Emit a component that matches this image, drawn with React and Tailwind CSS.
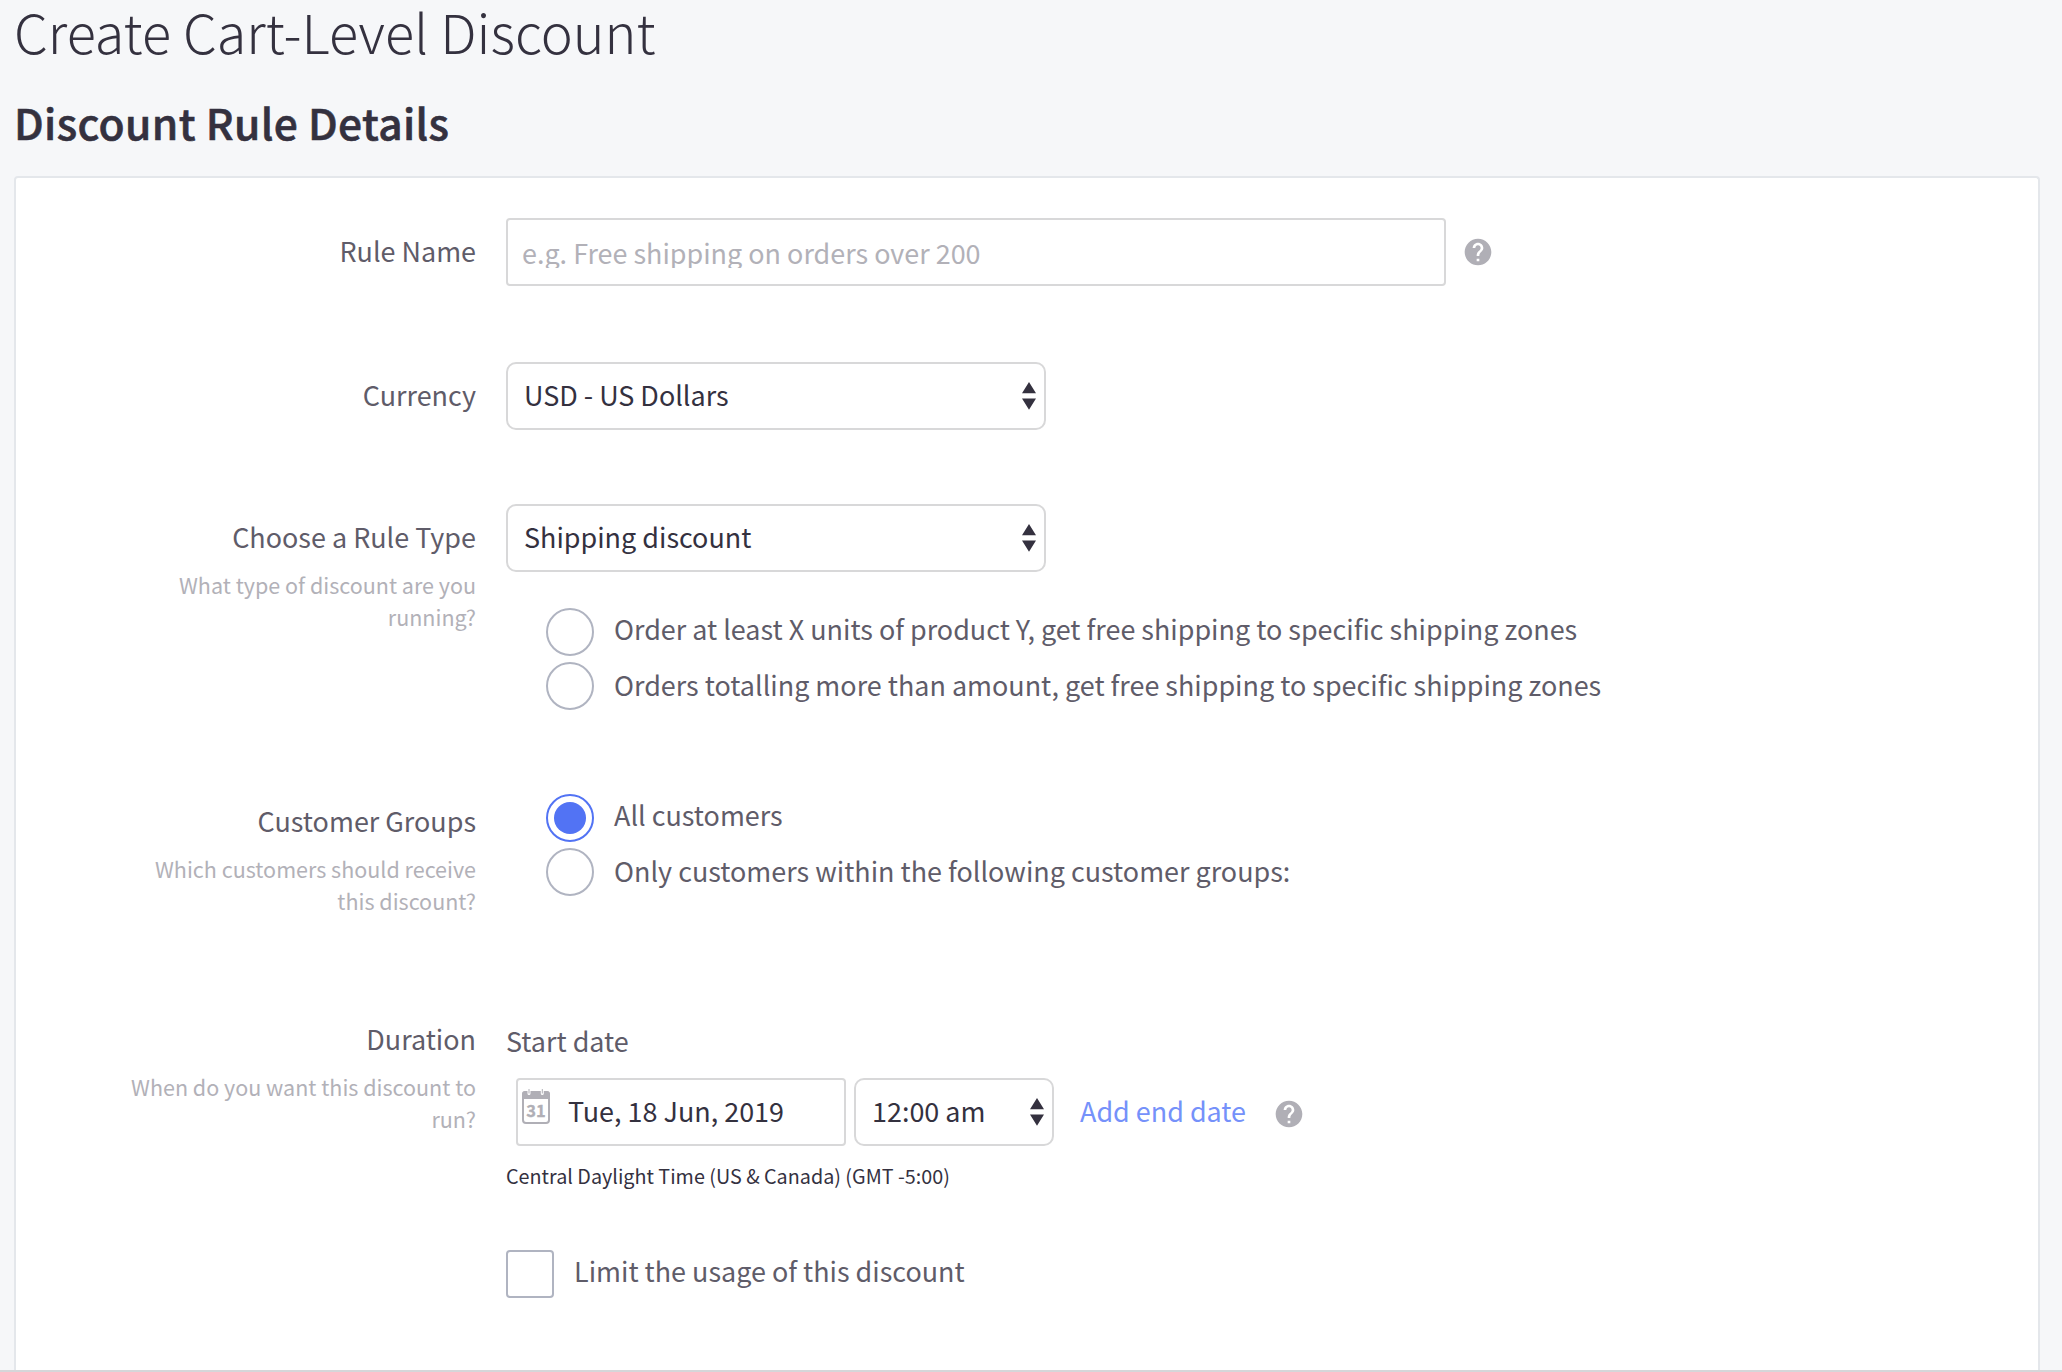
import { MdHelp } from "react-icons/md";

function Arrows() {
  return (
    <svg className="h-7 w-3.5 shrink-0 fill-[#34313f]" viewBox="0 0 14 28">
      <path d="M7 0L14 11.2H0z M0 16.4h14L7 27.8z" />
    </svg>
  );
}

function Select({ children, className }) {
  return (
    <button
      type="button"
      className={`flex h-[68px] items-center justify-between rounded-[10px] border-2 border-[#d8d8d9] bg-white pb-px pr-2 pl-4 text-[#34313f] ${className}`}
    >
      <span>{children}</span>
      <Arrows />
    </button>
  );
}

function Radio({ checked, textClass, children }) {
  return (
    <label className="flex h-[54px] items-start gap-5 pl-10">
      <span
        className={`flex size-12 shrink-0 items-center justify-center rounded-full border-2 bg-white ${
          checked ? "border-[#5273f4]" : "border-[#b0b4c1]"
        }`}
      >
        {checked && <span className="size-8 rounded-full bg-[#5273f4]" />}
      </span>
      <span className={textClass}>{children}</span>
    </label>
  );
}

function Row({ label, hint, className = "", children }) {
  return (
    <div className={`flex gap-[30px] ${className}`}>
      <div className="ml-[112px] w-[348px] shrink-0 pt-px text-right">
        <div className="leading-[64px]">{label}</div>
        {hint && <div className="text-[21.53px] leading-8 text-[#b2b1b8]">{hint}</div>}
      </div>
      <div>{children}</div>
    </div>
  );
}

function CalendarIcon() {
  return (
    <svg className="h-[35px] w-7 shrink-0" viewBox="0 0 28 35">
      <rect x="1" y="3" width="26" height="31" rx="3" fill="#fff" stroke="#b0afb6" strokeWidth="2" />
      <path d="M0 10V5q0-3 3-3h22q3 0 3 3v5z" fill="#b0afb6" />
      <path d="M5.500 0h3v4.500a1.500 1.500 0 0 1-3 0z M18.800 0h3v4.500a1.500 1.500 0 0 1-3 0z" fill="#fff" />
      <path d="M7 0v4.500 M20.300 0v4.500" stroke="#b0afb6" strokeWidth="1" />
      <text x="14" y="27.500" textAnchor="middle" fontSize="16.500" fontWeight="700" fill="#b0afb6" stroke="#b0afb6" strokeWidth="0.3">31</text>
    </svg>
  );
}

export default function App() {
  return (
    <div className="flex h-[1372px] w-[2062px] flex-col overflow-hidden border-b-2 border-[#d6d6d9] bg-[#f6f7f9] font-['Noto_Sans_CJK_SC',sans-serif] text-[26.94px] text-[#5f5c69]">
      <h1 className="pl-[14px] text-[54px] font-light leading-[61px] text-[#34313f]">Create Cart-Level Discount</h1>
      <h2 className="mt-[31px] pl-[14px] text-[42.5px] font-medium leading-[60px] tracking-[0.35px] text-[#34313f] [-webkit-text-stroke:0.6px_#34313f]">
        Discount Rule Details
      </h2>
      <div className="mt-6 ml-[14px] flex w-[2026px] grow flex-col rounded-t-[4px] border-2 border-b-0 border-[#e4e7eb] bg-white pt-10">
        <Row label="Rule Name">
          <div className="flex items-center">
            <div className="flex h-[68px] w-[940px] items-start rounded-[4px] border-2 border-[#d8d8d9] pt-3 pl-[14px]">
              <span className="h-9 overflow-hidden leading-[42px] text-[#b2b1b8]">e.g. Free shipping on orders over 200</span>
            </div>
            <MdHelp className="ml-4 size-8 text-[#b0afb6]" />
          </div>
        </Row>
        <Row label="Currency" className="mt-[76px]">
          <Select className="w-[540px]">USD - US Dollars</Select>
        </Row>
        <Row label="Choose a Rule Type" hint={<>What type of discount are you<br />running?</>} className="mt-[74px]">
          <Select className="w-[540px]">Shipping discount</Select>
          <div className="mt-9 h-[102px]">
            <Radio textClass="leading-[42px]">Order at least X units of product Y, get free shipping to specific shipping zones</Radio>
            <Radio textClass="leading-[46px]">Orders totalling more than amount, get free shipping to specific shipping zones</Radio>
          </div>
        </Row>
        <Row label="Customer Groups" hint={<>Which customers should receive<br />this discount?</>} className="mt-[78px] h-32">
          <div className="pt-1.5">
            <Radio checked textClass="leading-[42px]">All customers</Radio>
            <Radio textClass="leading-[46px]">Only customers within the following customer groups:</Radio>
          </div>
        </Row>
        <Row label="Duration" hint={<>When do you want this discount to<br />run?</>} className="mt-[90px]">
          <div className="leading-[70px]">Start date</div>
          <div className="mt-0.5 flex items-center">
            <div className="ml-[10px] flex h-[68px] w-[330px] items-start rounded-[4px] border-2 border-[#d8d8d9] pt-[9px] pl-1 text-[#34313f]">
              <CalendarIcon />
              <span className="ml-[18px] leading-[44px]">Tue, 18 Jun, 2019</span>
            </div>
            <Select className="ml-2 w-[200px]">12:00 am</Select>
            <a className="ml-[26px] pb-0.5 leading-[66px] text-[#7591fa]">Add end date</a>
            <MdHelp className="mt-1 ml-[27px] size-8 text-[#b0afb6]" />
          </div>
          <div className="mt-[14px] text-[19.76px] leading-8 text-[#34313f]">Central Daylight Time (US &amp; Canada) (GMT -5:00)</div>
          <label className="mt-[58px] flex items-start gap-5">
            <span className="size-12 rounded-[4px] border-2 border-[#b0b4c1]" />
            <span className="leading-[42px]">Limit the usage of this discount</span>
          </label>
        </Row>
      </div>
    </div>
  );
}
